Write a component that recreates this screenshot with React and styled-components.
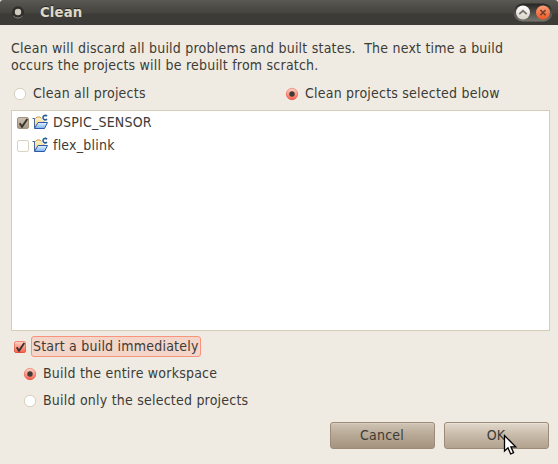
import React from "react";
import styled, { createGlobalStyle, css } from "styled-components";

const GlobalStyle = createGlobalStyle`
  * { box-sizing: border-box; }
  html, body { margin: 0; padding: 0; background: #efebe2; overflow: hidden; }
`;

const Dialog = styled.div`
  position: relative;
  display: flex;
  flex-direction: column;
  width: 558px;
  height: 464px;
  background: #efebe2;
  color: #3c3b37;
  font: 14px/17px "DejaVu Sans Condensed", "DejaVu Sans", sans-serif;
  font-stretch: condensed;
  letter-spacing: 0.22px;
  cursor: default;
  user-select: none;
`;

const TitleBar = styled.header`
  display: flex;
  align-items: center;
  flex: 0 0 25px;
  padding: 0 5px 0 11px;
  border-radius: 3px 3px 0 0;
  background: linear-gradient(#5a5954 0, #52514b 4px, #45443f 13px, #3c3b37 14px, #3c3b37 100%);
`;

const Title = styled.h1`
  flex: 1;
  margin: 0 0 0 15px;
  font: bold 13.3px/25px "DejaVu Sans", sans-serif;
  font-stretch: normal;
  letter-spacing: 0.1px;
  color: #dfd8c8;
  text-shadow: 0 -1px 0 #292824;
`;

const Body = styled.main`
  display: flex;
  flex-direction: column;
  padding: 15px 8px 0 11px;
`;

const Message = styled.p`
  margin: 0;
  white-space: pre;
`;

const ModeRow = styled.div`
  display: grid;
  grid-template-columns: 272px 1fr;
  margin: 9px 0 0 2px;
`;

const Choice = styled.label`
  display: flex;
  align-items: center;
  height: 20px;
  gap: 6px;

  svg { margin-top: 2px; }
`;

const ProjectList = styled.ul`
  height: 221px;
  margin: 7px 0 0;
  padding: 0 0 0 4px;
  list-style: none;
  background: #fff;
  border: 1px solid #d6cdb8;
`;

const Project = styled.li`
  display: flex;
  align-items: center;
  height: 23px;

  svg + svg { margin: 0 5px 2px 2px; }
`;

const BuildOptions = styled.div`
  display: flex;
  flex-direction: column;
  padding-left: 2px;
`;

const BuildToggle = styled.label`
  display: flex;
  align-items: center;
  height: 21px;
  margin-top: 5px;
  gap: 4px;
`;

const FocusedLabel = styled.span`
  height: 21px;
  padding: 0 1px;
  line-height: 19px;
  border: 1px solid #f9937b;
  border-radius: 3px;
  background: #f3d5c9;
`;

const Scope = styled.div`
  display: flex;
  flex-direction: column;
  gap: 7px;
  padding: 6px 0 0 10px;
`;

const Actions = styled.footer`
  display: flex;
  justify-content: flex-end;
  gap: 9px;
  margin: 12px 1px 0 0;
`;

const Button = styled.button`
  width: 105px;
  height: 27px;
  padding: 0 1px 0 0;
  border: 1px solid #9b8b78;
  border-radius: 3px;
  color: #3c3b37;
  font: inherit;
  letter-spacing: inherit;
  line-height: 25px;
  ${({ $highlight }) =>
    $highlight
      ? css`
          background: linear-gradient(#e1d9cc, #c9bcab 45%, #b2a28e);
          box-shadow: inset 0 1px #e8e1d6;
        `
      : css`
          background: linear-gradient(#d0c4b4, #b9aa97 45%, #a4937e);
          box-shadow: inset 0 1px #d7ccbe;
        `}
`;

const Pointer = styled.svg`
  position: absolute;
  left: 503px;
  top: 434px;
`;

const HiddenDefs = styled.svg`
  position: absolute;
`;

const Gradient = ({ id, from, to }) => (
  <linearGradient id={id} x2="0" y2="1">
    <stop stopColor={from} />
    <stop offset="1" stopColor={to} />
  </linearGradient>
);

const Gradients = () => (
  <HiddenDefs width="0" height="0" aria-hidden="true">
    <defs>
      <Gradient id="red" from="#ffd5c9" to="#f8604a" />
      <Gradient id="redEdge" from="#ee8b7b" to="#e5523f" />
      <Gradient id="tan" from="#cec3b3" to="#a69782" />
      <Gradient id="white" from="#ffffff" to="#d8d3c8" />
      <Gradient id="orange" from="#fa9f79" to="#ed5622" />
      <Gradient id="trough" from="#262522" to="#777670" />
      <Gradient id="folder" from="#e8f5ff" to="#79b0ed" />
      <Gradient id="folderBack" from="#fff3c8" to="#f5cf7c" />
    </defs>
  </HiddenDefs>
);

const MenuDot = () => (
  <svg width="14" height="14" viewBox="0 1 14 14">
    <circle cx="7" cy="7.2" r="6" fill="#2f2e2b" />
    <path d="M2.5 11a6 6 0 0 0 9 0" fill="none" stroke="#85827a" />
    <circle cx="7" cy="7" r="3.2" fill="#cfcabf" />
  </svg>
);

const WindowControls = () => (
  <svg width="40" height="20" viewBox="0 0 40 20">
    <rect x=".5" y=".5" width="39" height="18" rx="9" fill="url(#trough)" />
    <circle cx="10" cy="9.5" r="7" fill="url(#white)" />
    <path d="M6.2 11.2 10 7.8l3.8 3.4" fill="none" stroke="#77746b" strokeWidth="1.8" />
    <circle cx="30" cy="9.5" r="7" fill="url(#orange)" />
    <path d="m27.4 7 5.2 5.2m0-5.2-5.2 5.2" stroke="#6c4030" strokeWidth="1.6" />
  </svg>
);

const Radio = ({ checked }) => (
  <svg width="14" height="14" viewBox="0 0 14 14">
    <circle cx="7" cy="7" r="5.7" fill={checked ? "url(#red)" : "#fff"} stroke={checked ? "url(#redEdge)" : "#cfc5b1"} strokeWidth=".8" />
    {checked && <circle cx="7" cy="7" r="2.7" fill="#3c3b37" />}
  </svg>
);

const Check = ({ checked, tone }) => (
  <svg width="14" height="14" viewBox="0 0 14 14">
    <rect
      x="1.5" y="1.5" width="11" height="11" rx="1.6"
      fill={checked ? `url(#${tone})` : "#fff"}
      stroke={!checked ? "#dbd2c0" : tone === "red" ? "url(#redEdge)" : "#a2937d"}
    />
    {checked && <path d="m3.7 7.3 2.3 3.4L11.3 3" fill="none" stroke="#35342f" strokeWidth="1.9" />}
  </svg>
);

const ProjectIcon = () => (
  <svg width="16" height="16" viewBox="0 0 16 16">
    <path d="M2.5 14V4.5h1L5 3h3l1.500 1.500H12v4" fill="url(#folderBack)" stroke="#c99c4b" />
    <path d="M.5 4.500h2V14" fill="none" stroke="#4a6791" />
    <path d="M2.500 14.500 6 8.500h9.500l-3 6z" fill="url(#folder)" stroke="#2f58a8" strokeLinejoin="round" />
    <path d="M15 2.100C13.500.7 11 1.400 11 3.600s2.500 3 4 1.600" fill="none" stroke="#fff" strokeWidth="3" />
    <path d="M15 2.100C13.500.7 11 1.400 11 3.600s2.500 3 4 1.600" fill="none" stroke="#255c91" strokeWidth="1.600" />
  </svg>
);

const projects = [
  { name: "DSPIC_SENSOR", selected: true },
  { name: "flex_blink", selected: false },
];

export default function App() {
  return (
    <Dialog>
      <GlobalStyle />
      <Gradients />
      <TitleBar>
        <MenuDot />
        <Title>Clean</Title>
        <WindowControls />
      </TitleBar>
      <Body>
        <Message>{"Clean will discard all build problems and built states.  The next time a build\noccurs the projects will be rebuilt from scratch."}</Message>
        <ModeRow>
          <Choice><Radio />Clean all projects</Choice>
          <Choice><Radio checked />Clean projects selected below</Choice>
        </ModeRow>
        <ProjectList>
          {projects.map((p) => (
            <Project key={p.name}>
              <Check checked={p.selected} tone="tan" />
              <ProjectIcon />
              {p.name}
            </Project>
          ))}
        </ProjectList>
        <BuildOptions>
          <BuildToggle>
            <Check checked tone="red" />
            <FocusedLabel>Start a build immediately</FocusedLabel>
          </BuildToggle>
          <Scope>
            <Choice><Radio checked />Build the entire workspace</Choice>
            <Choice><Radio />Build only the selected projects</Choice>
          </Scope>
        </BuildOptions>
        <Actions>
          <Button>Cancel</Button>
          <Button $highlight>OK</Button>
        </Actions>
      </Body>
      <Pointer width="14" height="22" viewBox="0 0 14 22">
        <path d="M1.5 1.5v15.5l3.5-3.2 2.6 6.2 3-1.3-2.7-5.9h4.8z" fill="#fff" stroke="#000" strokeWidth="1.3" />
      </Pointer>
    </Dialog>
  );
}
